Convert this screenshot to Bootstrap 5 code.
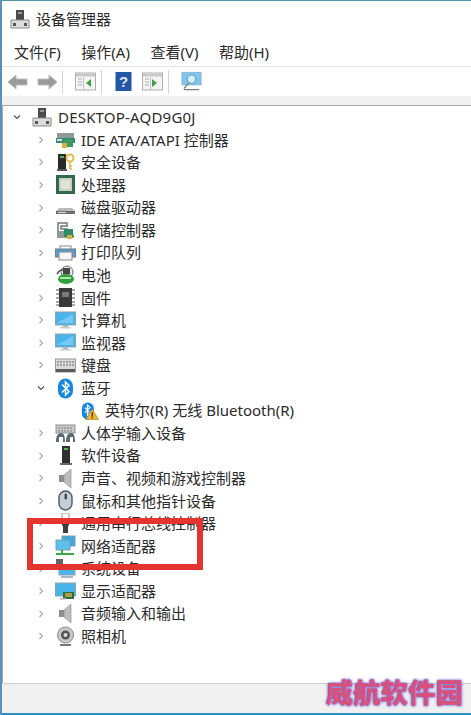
<!DOCTYPE html>
<html lang="zh-CN">
<head>
    <meta charset="UTF-8">
    <meta name="viewport" content="width=device-width, initial-scale=1.0">
    <title>设备管理器</title>
    <link href="https://cdn.jsdelivr.net/npm/bootstrap@5.3.0/dist/css/bootstrap.min.css" rel="stylesheet">
    <style>
        html, body { height: 100%; }
        body { font-family: "Noto Sans", "Noto Sans CJK SC", sans-serif; font-size: 15px; color: #2b2b2b; background: #fff; }
        .dm-window { width: 471px; height: 715px; border-top: 1px solid #4f93a8; border-left: 2px solid #5f8fb8; border-bottom: 2px solid #2f8ec4; }
        .dm-title { height: 37px; padding-left: 8px; gap: 5px; }
        .dm-menu { height: 29px; padding-left: 12px; gap: 20.5px; border-bottom: 1px solid #e4e4e4; }
        .dm-tools { height: 29px; padding-left: 5px; }
        .dm-sep { width: 1px; height: 24px; background: #d4d4d4; flex: none; }
        .dm-strip { height: 9px; background: #f0f0f0; }
        .dm-tree { flex: 1; border: 1px solid #a9a9a9; border-width: 1px 0 0 1px; position: relative; }
        .dm-row { height: 22.57px; white-space: nowrap; line-height: 22.5px; }
        .dm-chev { width: 8px; height: 8px; margin-left: 34px; margin-right: 11px; flex: none; }
        .dm-root .dm-chev { margin-left: 10px; margin-right: 12px; }
        .dm-root span { letter-spacing: .2px; }
        .dm-icon { width: 21px; height: 21px; flex: none; margin-right: 5px; margin-left: -1px; }
        .dm-child { padding-left: 78px; }
        .dm-child .dm-icon { width: 18px; height: 18px; margin-right: 6px; margin-left: 0; }
        .dm-status { height: 30px; background: #f0f0f0; border-top: 1px solid #cfcfcf; }
        .dm-mark { position: absolute; left: 24px; top: 412px; width: 176px; height: 52px; border: 6px solid #e5332f; }
        .dm-watermark { position: absolute; right: 8px; bottom: 7px; font-family: "Noto Sans CJK SC", sans-serif; font-weight: 900; font-size: 27.5px; line-height: 34px; color: #d8517c; text-shadow: 0 0 3px #6f76e8, 0 0 2px #6f76e8; }
        .dm-shell { position: relative; }
        .t-fwd { margin-left: 7px; margin-right: 4px; }
        .t-a { margin: 0 5px 0 12px; }
        .t-help { margin: 0 10px 0 13px; }
        .t-b { margin-right: 5px; }
        .t-scan { margin-left: 12px; }
    </style>
</head>
<body>
    <svg width="0" height="0" class="position-absolute">
        <defs>
            <symbol id="i-chev-r" viewBox="0 0 8 8"><path d="M2.5 1 L5.5 4 L2.5 7" fill="none" stroke="#a6a6a6" stroke-width="1.1"/></symbol>
            <symbol id="i-chev-d" viewBox="0 0 8 8"><path d="M1 2.5 L4 5.5 L7 2.5" fill="none" stroke="#555" stroke-width="1.2"/></symbol>
            <symbol id="i-pc" viewBox="0 0 21 21"><rect x="6" y="1" width="8" height="10" fill="#4a4a4a"/><rect x="8" y="3" width="4" height="2" fill="#999"/><path d="M1 11h18v8H1z" fill="#dcdcdc" stroke="#8a8a8a"/><rect x="3" y="14" width="3" height="3" fill="#555"/><rect x="14" y="14" width="3" height="3" fill="#555"/></symbol>
            <symbol id="i-ide" viewBox="0 0 21 21"><rect x="2" y="4" width="17" height="5" fill="#8d9a96"/><path d="M1 9h19v5H1z" fill="#2e8b74"/><rect x="9" y="10" width="9" height="8" fill="#3c9a5e"/><rect x="7" y="14" width="5" height="5" fill="#d9b23c"/><rect x="2" y="10" width="5" height="2" fill="#ddd"/></symbol>
            <symbol id="i-sec" viewBox="0 0 21 21"><rect x="3" y="2" width="8" height="16" fill="#2a2a2a"/><rect x="5" y="4" width="4" height="2" fill="#5fae5f"/><rect x="2" y="17" width="10" height="2" fill="#555"/><circle cx="15" cy="6" r="3.5" fill="none" stroke="#e5b84a" stroke-width="2"/><path d="M15 9v8M15 14h2M15 17h2" stroke="#e5b84a" stroke-width="1.6"/></symbol>
            <symbol id="i-cpu" viewBox="0 0 21 21"><rect x="1" y="1" width="19" height="19" fill="#2f6b48"/><rect x="4" y="4" width="13" height="13" fill="#c9cfc3"/><rect x="6" y="6" width="9" height="9" fill="#dfe3da"/></symbol>
            <symbol id="i-disk" viewBox="0 0 21 21"><path d="M4 11h13l3 3v3H1v-3z" fill="#b9b9b9"/><rect x="1" y="14" width="19" height="3" fill="#6f6f6f"/><rect x="3" y="15" width="8" height="1" fill="#ddd"/></symbol>
            <symbol id="i-store" viewBox="0 0 21 21"><path d="M3 3h9v3H6v3h6v3H3z" fill="none" stroke="#6d7a76" stroke-width="1.5"/><path d="M2 12h14l3 3v3H2z" fill="#8f9b98"/><rect x="9" y="9" width="9" height="8" fill="#2f8b68"/><rect x="12" y="15" width="5" height="4" fill="#d9b23c"/></symbol>
            <symbol id="i-print" viewBox="0 0 21 21"><rect x="5" y="4" width="11" height="4" fill="#fff" stroke="#8a8a8a"/><rect x="0.5" y="7" width="20" height="8" fill="#5a9cc8" stroke="#6f7d88"/><rect x="4" y="10" width="13" height="8" fill="#f6f6f6" stroke="#8a8a8a"/></symbol>
            <symbol id="i-batt" viewBox="0 0 21 21"><circle cx="12" cy="7" r="6" fill="#e8e8e8" stroke="#6b6b6b"/><path d="M2 9c3-5 6-5 9-2" fill="none" stroke="#555" stroke-width="1.5"/><ellipse cx="11" cy="14" rx="8" ry="5" fill="#2e9e3e"/><path d="M5 13h11" stroke="#b6e6a8" stroke-width="2"/><rect x="8" y="3" width="7" height="6" fill="#444"/></symbol>
            <symbol id="i-chip" viewBox="0 0 21 21"><rect x="4" y="1" width="13" height="19" fill="#3a3a3a"/><path d="M1 3h3M1 7h3M1 11h3M1 15h3M1 18h3M17 3h3M17 7h3M17 11h3M17 15h3M17 18h3" stroke="#8d8d8d" stroke-width="1.6"/><rect x="7" y="5" width="7" height="5" fill="#7b7b7b"/></symbol>
            <symbol id="i-screen" viewBox="0 0 21 21"><rect x="0.5" y="2" width="20" height="13" fill="#49b4ea" stroke="#8ea4b0"/><path d="M2 13l16-9v9z" fill="#74c8f2"/><rect x="8" y="15" width="5" height="2" fill="#a9b6bd"/><rect x="5" y="17" width="11" height="1.5" fill="#c4ccd1"/></symbol>
            <symbol id="i-kbd" viewBox="0 0 21 21"><rect x="0.5" y="4" width="20" height="13" fill="#d9d9d9" stroke="#999"/><path d="M2 7h17M2 10h17" stroke="#8c8c8c" stroke-width="1.5" stroke-dasharray="2 1"/><rect x="1" y="14" width="19" height="3" fill="#5a5a5a"/></symbol>
            <symbol id="i-bt" viewBox="0 0 21 21"><rect x="3" y="0.5" width="15" height="20" rx="7.5" fill="#1687e2"/><path d="M7 6.5l7 7-3.5 3.5v-13L14 7.5l-7 7" fill="none" stroke="#fff" stroke-width="1.5"/></symbol>
            <symbol id="i-btw" viewBox="0 0 21 21"><rect x="1" y="0.5" width="14" height="20" rx="7" fill="#1687e2"/><path d="M4.5 6.5l6 6-3 3v-12l3 3-6 6" fill="none" stroke="#fff" stroke-width="1.3"/><path d="M13 8l7.5 12.5h-15z" fill="#f2b32a" stroke="#8a6a1a" stroke-width=".6"/><rect x="12.4" y="12" width="1.4" height="5" fill="#222"/><rect x="12.4" y="17.6" width="1.4" height="1.4" fill="#222"/></symbol>
            <symbol id="i-hid" viewBox="0 0 21 21"><rect x="1" y="2" width="19" height="8" fill="#c9c9c9" stroke="#8f8f8f"/><path d="M3 5h15M3 8h15" stroke="#7d7d7d" stroke-dasharray="2 1"/><path d="M1 19c0-6 2-9 5-9s4 3 4 9h-2v-5H4v5zM11 19c0-6 2-9 5-9s4 3 4 9h-2v-5h-3v5z" fill="#5a6a75"/></symbol>
            <symbol id="i-soft" viewBox="0 0 21 21"><rect x="7" y="1" width="8" height="17" fill="#2f2f2f"/><rect x="9" y="3" width="4" height="2" fill="#5fae5f"/><rect x="5" y="18" width="12" height="2" fill="#666"/></symbol>
            <symbol id="i-sound" viewBox="0 0 21 21"><rect x="4" y="7" width="5" height="7" fill="#8f8f8f"/><path d="M9 7l7-6v19l-7-6z" fill="#bdbdbd" stroke="#8a8a8a" stroke-width=".6"/></symbol>
            <symbol id="i-mouse" viewBox="0 0 21 21"><rect x="4" y="1" width="13" height="19" rx="6.5" fill="#c5ced6" stroke="#4c5965" stroke-width="1.4"/><rect x="9.5" y="3.5" width="2.5" height="6" rx="1.2" fill="#3e4a55"/></symbol>
            <symbol id="i-usb" viewBox="0 0 21 21"><rect x="7" y="0" width="7" height="6" fill="#fff" stroke="#9a9a9a"/><path d="M5 7h11l-3 7v6H8v-6z" fill="#3d3d3d"/></symbol>
            <symbol id="i-net" viewBox="0 0 21 21"><rect x="7" y="1" width="13" height="10" fill="#3fa8e0" stroke="#7f9cae"/><rect x="1" y="5" width="14" height="10" fill="#5cc0ee" stroke="#7f9cae"/><path d="M7 15v3M1 19h18" stroke="#39a845" stroke-width="2"/></symbol>
            <symbol id="i-sys" viewBox="0 0 21 21"><rect x="1" y="1" width="7" height="8" fill="#666"/><rect x="4" y="7" width="16" height="10" fill="#49b4ea" stroke="#8ea4b0"/><rect x="6" y="18" width="12" height="2" fill="#a9b6bd"/></symbol>
            <symbol id="i-gpu" viewBox="0 0 21 21"><rect x="0.5" y="2" width="20" height="13" fill="#49b4ea" stroke="#8ea4b0"/><rect x="8" y="11" width="11" height="7" fill="#2d6b44"/><path d="M10 13h7M10 15h7" stroke="#d9b23c" stroke-width="1.3"/><rect x="5" y="17" width="6" height="1.5" fill="#aab"/></symbol>
            <symbol id="i-cam" viewBox="0 0 21 21"><circle cx="10.5" cy="9" r="8" fill="#c9c9c9" stroke="#8a8a8a"/><circle cx="10.5" cy="9" r="4.5" fill="#555"/><circle cx="10.5" cy="9" r="2" fill="#ddd"/><rect x="5" y="18" width="11" height="2" fill="#777"/></symbol>
            <symbol id="i-panel" viewBox="0 0 21 21"><rect x="0.5" y="2" width="20" height="17" fill="#f4f4f4" stroke="#b0b0b0"/><rect x="1" y="2.5" width="19" height="3" fill="#c9c9c9"/><path d="M3 8h4M3 11h4M3 14h4" stroke="#9fb0bb"/><path d="M8.5 6v13" stroke="#c4c4c4"/></symbol>
        </defs>
    </svg>

    <div class="dm-shell">
    <div class="dm-window d-flex flex-column">
        <div class="dm-title d-flex align-items-center">
            <svg class="dm-icon m-0"><use href="#i-pc"/></svg>
            <span>设备管理器</span>
        </div>
        <div class="dm-menu d-flex align-items-center">
            <span>文件(F)</span><span>操作(A)</span><span>查看(V)</span><span>帮助(H)</span>
        </div>
        <div class="dm-tools d-flex align-items-center">
            <svg width="22" height="20" viewBox="0 0 22 20"><path d="M1 10l8-7v4h11v6H9v4z" fill="#9a9a9a" stroke="#bbb"/></svg>
            <svg class="t-fwd" width="22" height="20" viewBox="0 0 22 20"><path d="M21 10l-8-7v4H2v6h11v4z" fill="#9a9a9a" stroke="#bbb"/></svg>
            <div class="dm-sep"></div>
            <svg class="t-a" width="21" height="21"><use href="#i-panel"/><path d="M16 8l-5 4 5 4z" fill="#3ea24b"/></svg>
            <div class="dm-sep"></div>
            <svg class="t-help" width="17" height="21" viewBox="0 0 17 21"><rect x="0.5" y="1" width="16" height="19" fill="#2456a8"/><text x="8.5" y="16" text-anchor="middle" font-size="15" font-weight="700" fill="#dfe8f6" font-family="Liberation Sans">?</text></svg>
            <svg class="t-b" width="21" height="21"><use href="#i-panel"/><path d="M10 8l5 4-5 4z" fill="#3ea24b"/></svg>
            <div class="dm-sep"></div>
            <svg class="t-scan" width="21" height="21" viewBox="0 0 22 21"><rect x="1" y="1" width="20" height="13" fill="#7cc8ee" stroke="#8fb4c8"/><circle cx="11" cy="8" r="4.5" fill="#d5eefb" stroke="#5a8ea8"/><path d="M8 12l-5 6M3 19h16" stroke="#6f8b78" stroke-width="1.5"/></svg>
        </div>
        <div class="dm-strip"></div>
        <div class="dm-tree">
            <div class="dm-row dm-root d-flex align-items-center"><svg class="dm-chev"><use href="#i-chev-d"/></svg><svg class="dm-icon"><use href="#i-pc"/></svg><span>DESKTOP-AQD9G0J</span></div>
            <div class="dm-row d-flex align-items-center"><svg class="dm-chev"><use href="#i-chev-r"/></svg><svg class="dm-icon"><use href="#i-ide"/></svg><span>IDE ATA/ATAPI 控制器</span></div>
            <div class="dm-row d-flex align-items-center"><svg class="dm-chev"><use href="#i-chev-r"/></svg><svg class="dm-icon"><use href="#i-sec"/></svg><span>安全设备</span></div>
            <div class="dm-row d-flex align-items-center"><svg class="dm-chev"><use href="#i-chev-r"/></svg><svg class="dm-icon"><use href="#i-cpu"/></svg><span>处理器</span></div>
            <div class="dm-row d-flex align-items-center"><svg class="dm-chev"><use href="#i-chev-r"/></svg><svg class="dm-icon"><use href="#i-disk"/></svg><span>磁盘驱动器</span></div>
            <div class="dm-row d-flex align-items-center"><svg class="dm-chev"><use href="#i-chev-r"/></svg><svg class="dm-icon"><use href="#i-store"/></svg><span>存储控制器</span></div>
            <div class="dm-row d-flex align-items-center"><svg class="dm-chev"><use href="#i-chev-r"/></svg><svg class="dm-icon"><use href="#i-print"/></svg><span>打印队列</span></div>
            <div class="dm-row d-flex align-items-center"><svg class="dm-chev"><use href="#i-chev-r"/></svg><svg class="dm-icon"><use href="#i-batt"/></svg><span>电池</span></div>
            <div class="dm-row d-flex align-items-center"><svg class="dm-chev"><use href="#i-chev-r"/></svg><svg class="dm-icon"><use href="#i-chip"/></svg><span>固件</span></div>
            <div class="dm-row d-flex align-items-center"><svg class="dm-chev"><use href="#i-chev-r"/></svg><svg class="dm-icon"><use href="#i-screen"/></svg><span>计算机</span></div>
            <div class="dm-row d-flex align-items-center"><svg class="dm-chev"><use href="#i-chev-r"/></svg><svg class="dm-icon"><use href="#i-screen"/></svg><span>监视器</span></div>
            <div class="dm-row d-flex align-items-center"><svg class="dm-chev"><use href="#i-chev-r"/></svg><svg class="dm-icon"><use href="#i-kbd"/></svg><span>键盘</span></div>
            <div class="dm-row d-flex align-items-center"><svg class="dm-chev"><use href="#i-chev-d"/></svg><svg class="dm-icon"><use href="#i-bt"/></svg><span>蓝牙</span></div>
            <div class="dm-row dm-child d-flex align-items-center"><svg class="dm-icon"><use href="#i-btw"/></svg><span>英特尔(R) 无线 Bluetooth(R)</span></div>
            <div class="dm-row d-flex align-items-center"><svg class="dm-chev"><use href="#i-chev-r"/></svg><svg class="dm-icon"><use href="#i-hid"/></svg><span>人体学输入设备</span></div>
            <div class="dm-row d-flex align-items-center"><svg class="dm-chev"><use href="#i-chev-r"/></svg><svg class="dm-icon"><use href="#i-soft"/></svg><span>软件设备</span></div>
            <div class="dm-row d-flex align-items-center"><svg class="dm-chev"><use href="#i-chev-r"/></svg><svg class="dm-icon"><use href="#i-sound"/></svg><span>声音、视频和游戏控制器</span></div>
            <div class="dm-row d-flex align-items-center"><svg class="dm-chev"><use href="#i-chev-r"/></svg><svg class="dm-icon"><use href="#i-mouse"/></svg><span>鼠标和其他指针设备</span></div>
            <div class="dm-row d-flex align-items-center"><svg class="dm-chev"><use href="#i-chev-r"/></svg><svg class="dm-icon"><use href="#i-usb"/></svg><span>通用串行总线控制器</span></div>
            <div class="dm-row d-flex align-items-center"><svg class="dm-chev"><use href="#i-chev-r"/></svg><svg class="dm-icon"><use href="#i-net"/></svg><span>网络适配器</span></div>
            <div class="dm-row d-flex align-items-center"><svg class="dm-chev"><use href="#i-chev-r"/></svg><svg class="dm-icon"><use href="#i-sys"/></svg><span>系统设备</span></div>
            <div class="dm-row d-flex align-items-center"><svg class="dm-chev"><use href="#i-chev-r"/></svg><svg class="dm-icon"><use href="#i-gpu"/></svg><span>显示适配器</span></div>
            <div class="dm-row d-flex align-items-center"><svg class="dm-chev"><use href="#i-chev-r"/></svg><svg class="dm-icon"><use href="#i-sound"/></svg><span>音频输入和输出</span></div>
            <div class="dm-row d-flex align-items-center"><svg class="dm-chev"><use href="#i-chev-r"/></svg><svg class="dm-icon"><use href="#i-cam"/></svg><span>照相机</span></div>
            <div class="dm-mark"></div>
        </div>
        <div class="dm-status"></div>
    </div>
    <div class="dm-watermark">威航软件园</div>
    </div>

    <script src="https://cdn.jsdelivr.net/npm/bootstrap@5.3.0/dist/js/bootstrap.bundle.min.js"></script>
</body>
</html>
